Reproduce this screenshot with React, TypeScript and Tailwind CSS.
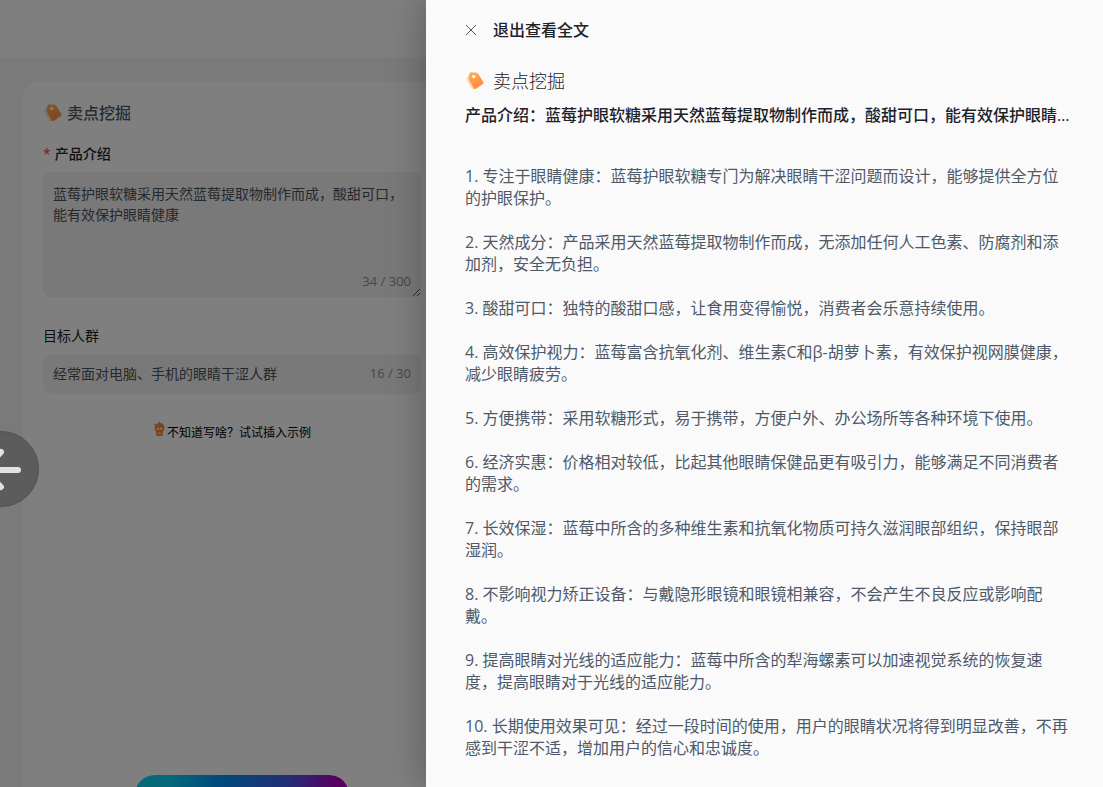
interface TagIconProps {
    className?: string;
}

const sellingPoints = [
    "专注于眼睛健康：蓝莓护眼软糖专门为解决眼睛干涩问题而设计，能够提供全方位的护眼保护。",
    "天然成分：产品采用天然蓝莓提取物制作而成，无添加任何人工色素、防腐剂和添加剂，安全无负担。",
    "酸甜可口：独特的酸甜口感，让食用变得愉悦，消费者会乐意持续使用。",
    "高效保护视力：蓝莓富含抗氧化剂、维生素C和β-胡萝卜素，有效保护视网膜健康，减少眼睛疲劳。",
    "方便携带：采用软糖形式，易于携带，方便户外、办公场所等各种环境下使用。",
    "经济实惠：价格相对较低，比起其他眼睛保健品更有吸引力，能够满足不同消费者的需求。",
    "长效保湿：蓝莓中所含的多种维生素和抗氧化物质可持久滋润眼部组织，保持眼部湿润。",
    "不影响视力矫正设备：与戴隐形眼镜和眼镜相兼容，不会产生不良反应或影响配戴。",
    "提高眼睛对光线的适应能力：蓝莓中所含的犁海螺素可以加速视觉系统的恢复速度，提高眼睛对于光线的适应能力。",
    "长期使用效果可见：经过一段时间的使用，用户的眼睛状况将得到明显改善，不再感到干涩不适，增加用户的信心和忠诚度。",
];

const intro = "蓝莓护眼软糖采用天然蓝莓提取物制作而成，酸甜可口，能有效保护眼睛健康";

const TagIcon = ({ className }: TagIconProps) => (
    <svg className={className} viewBox="0 0 20 20" fill="none" aria-hidden="true">
        <defs>
            <linearGradient id="tag" x1="6" y1="1" x2="13" y2="18" gradientUnits="userSpaceOnUse">
                <stop stopColor="#ffae54" />
                <stop offset="1" stopColor="#ff8742" />
            </linearGradient>
        </defs>
        <path d="M4.6 2.6 1.6 7.2Q1.1 8 1.6 8.9L6.3 17.4Q7 18.6 8.6 18.2L12 16.5Z" fill="#ffd9b4" />
        <path
            d="M5.8 1.3 11.4 1.7Q12.4 1.8 13 2.6L18.4 11.1Q19.1 12.3 17.9 13.1L10.9 17.8Q9.5 18.6 8.7 17.2L3.9 8.4Q3.4 7.6 3.7 6.7L4.8 2.1Q5 1.3 5.8 1.3Z"
            fill="url(#tag)"
        />
        <circle cx="8.7" cy="5.6" r="1.7" fill="#fff" />
    </svg>
);

const BulbIcon = () => (
    <svg className="h-4 w-3 shrink-0" viewBox="0 0 12 16" aria-hidden="true">
        <path
            d="M6.5 0 7.3 2H5.7ZM.2 2.5 2.4 3.3 1.5 4.6ZM6.5 2C9.3 2 11.5 4 11.5 6.7 11.5 8.6 10.4 9.8 9.8 11V14Q9.8 15 8.8 15H4.2Q3.2 15 3.2 14V11C2.5 9.8 1.5 8.6 1.5 6.7 1.5 4 3.7 2 6.5 2Z"
            fill="#f08a3c"
        />
        <path d="M4.3 8.8V6.8L6.5 8.4 8.7 6.8V8.8M5.2 12.2H7.8" fill="none" stroke="#fff" strokeWidth="1" />
    </svg>
);

const ProductForm = () => (
    <form className="w-[418px] flex-1 rounded-t-2xl bg-white px-5 pt-[19px]">
        <h2 className="flex items-center gap-1 text-base leading-6 font-medium text-[#4e5969]">
            <TagIcon className="size-5" />
            卖点挖掘
        </h2>
        <div className="mt-[17px] flex flex-col">
            <label htmlFor="intro" className="text-sm leading-6 font-medium text-[#1d2129]">
                <span className="mr-1 text-[#f53f3f]">*</span>
                产品介绍
            </label>
            <div className="relative mt-[6px] flex">
                <textarea
                    id="intro"
                    className="h-[125px] w-full rounded-lg bg-[#f3f3f3] px-[10px] py-[11px] text-sm leading-[21px] text-[#4e5259] outline-none"
                    defaultValue={intro}
                />
                <span className="pointer-events-none absolute right-[10px] bottom-1 text-[13px] leading-6 text-[#86909c]">
                    34 / 300
                </span>
            </div>
        </div>
        <div className="mt-[27px] flex flex-col">
            <label htmlFor="audience" className="text-sm leading-6 text-[#1d2129]">
                目标人群
            </label>
            <div className="mt-[6px] flex h-10 items-center rounded-lg bg-[#f3f3f3] px-[10px]">
                <input
                    id="audience"
                    className="min-w-0 flex-1 text-sm text-[#4e5259] outline-none"
                    defaultValue="经常面对电脑、手机的眼睛干涩人群"
                />
                <span className="text-[13px] text-[#86909c]">16 / 30</span>
            </div>
        </div>
        <button type="button" className="mx-auto mt-[27px] flex h-6 gap-[2px] text-xs leading-6 text-black">
            <BulbIcon />
            不知道写啥？试试插入示例
        </button>
    </form>
);

const ResultDrawer = () => (
    <aside
        role="dialog"
        aria-label="查看全文"
        className="absolute inset-y-0 right-0 w-[677px] overflow-hidden bg-[#fafafa] pr-[30px] pl-[39px] shadow-[0_0_36px_rgba(0,0,0,0.3)]"
    >
        <button type="button" className="mt-[18px] flex h-6 items-center gap-4 text-base font-medium text-[#1d2129]">
            <svg className="size-3" viewBox="0 0 12 12" fill="none" stroke="#4e5969" aria-hidden="true">
                <path d="M1 1 11 11M11 1 1 11" />
            </svg>
            退出查看全文
        </button>
        <h2 className="mt-[25px] flex h-7 items-center gap-2 text-lg font-light text-[#1d2129]">
            <TagIcon className="size-5" />
            卖点挖掘
        </h2>
        <p className="mt-2 truncate text-base leading-6 font-medium text-[#1d2129]">{`产品介绍：${intro}`}</p>
        <div className="mt-[38px] space-y-[22px] text-base leading-[22px] text-[#4e5969]">
            {sellingPoints.map((point, index) => (
                <p key={point}>{`${index + 1}. ${point}`}</p>
            ))}
        </div>
    </aside>
);

export default function App() {
    return (
        <div className="relative h-screen overflow-hidden bg-[#f5f5f5] font-['Open_Sans','Noto_Sans_CJK_SC',sans-serif]">
            <div className="flex h-full flex-col">
                <header className="h-[57px] shrink-0 bg-white" />
                <main className="relative flex flex-1 flex-col pt-[25px] pl-[23px]">
                    <ProductForm />
                    <button
                        type="button"
                        aria-label="开始生成"
                        className="absolute -bottom-7 left-[135px] h-10 w-[214px] rounded-full bg-[linear-gradient(100deg,#0cd2f5_15%,#0096ff_38%,#4659f0_70%,#b400be_92%)]"
                    />
                </main>
            </div>
            <div className="absolute inset-0 bg-black/50" />
            <ResultDrawer />
            <button
                type="button"
                aria-label="返回"
                className="absolute top-[431px] -left-[37px] size-[76px] rounded-full border border-[#505050] bg-[#5c5c5c]"
            >
                <svg
                    className="size-full"
                    viewBox="0 0 74 74"
                    fill="none"
                    stroke="#e2e2e2"
                    strokeWidth="6"
                    strokeLinecap="round"
                    strokeLinejoin="round"
                    aria-hidden="true"
                >
                    <path d="M54 38H20M37 20 20 38 37 55" />
                </svg>
            </button>
        </div>
    );
}
